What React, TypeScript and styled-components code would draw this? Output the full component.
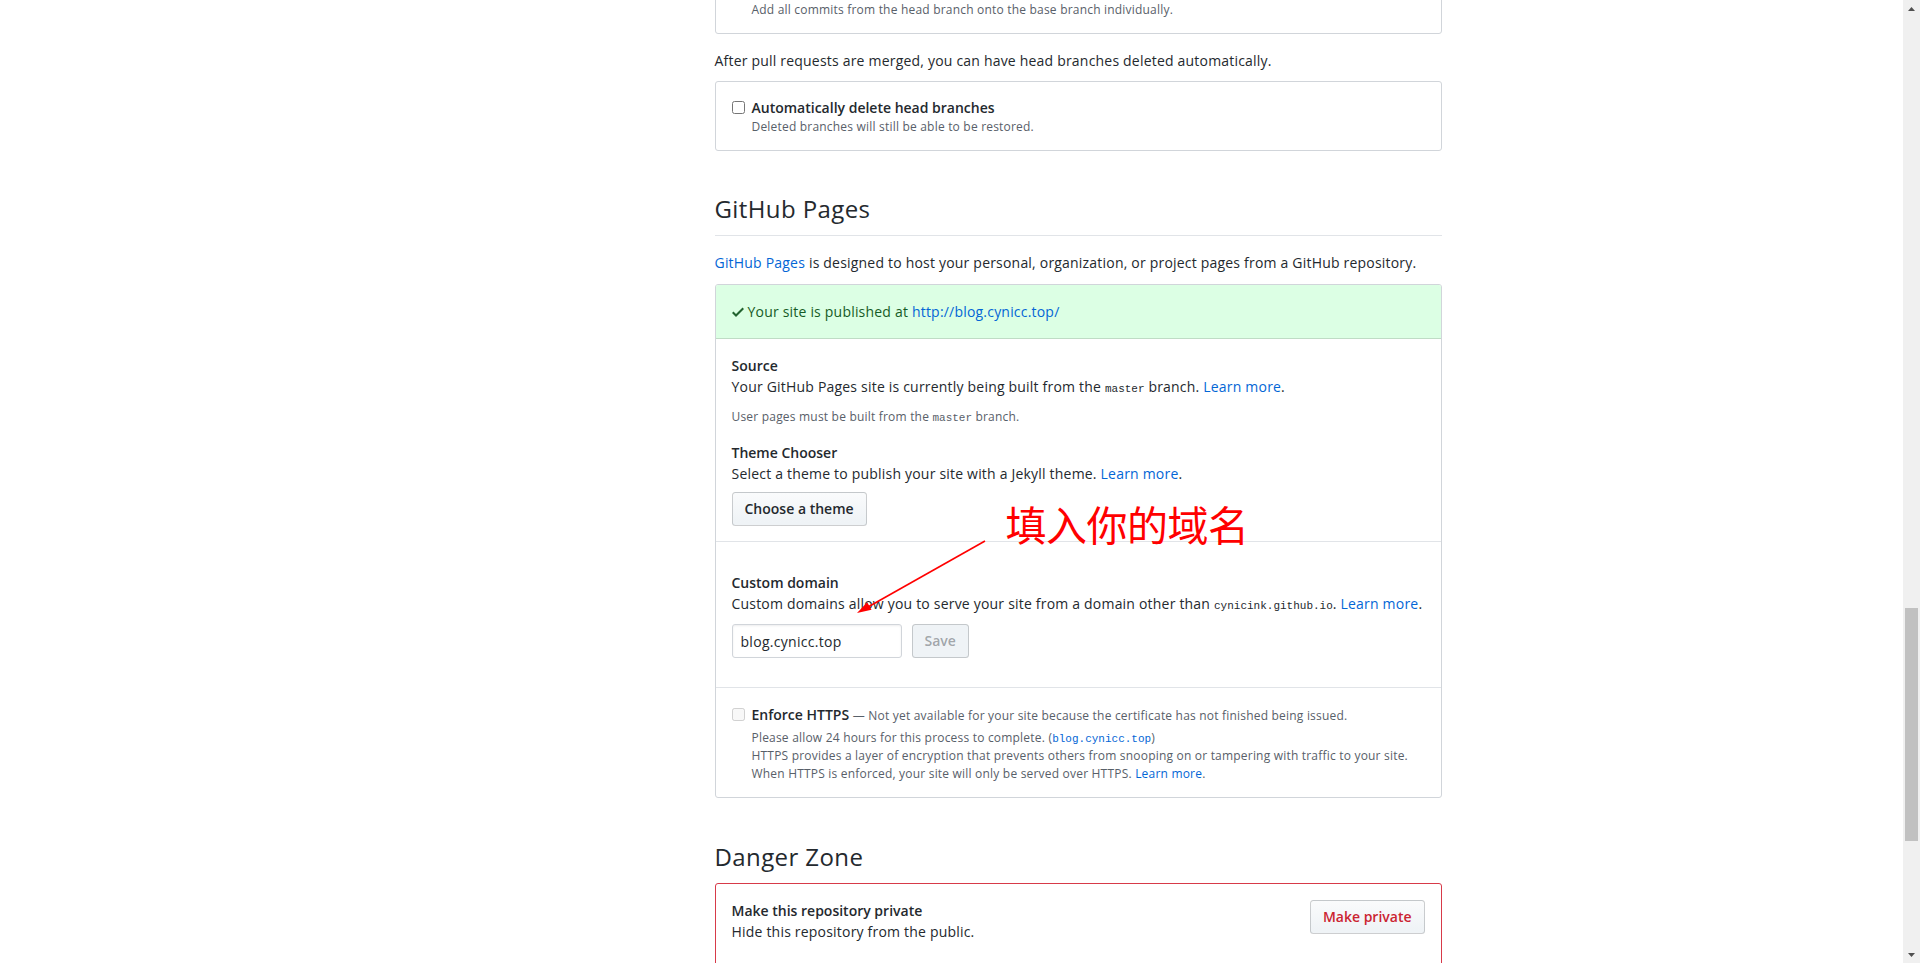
import React from "react";
import styled, { createGlobalStyle, css } from "styled-components";

const GlobalStyle = createGlobalStyle`
  html, body { margin: 0; padding: 0; height: 100%; overflow: hidden; background: #fff; }
  body {
    font-family: "Open Sans", "Noto Sans CJK SC", sans-serif;
    font-size: 14px;
    line-height: 1.5;
    letter-spacing: 0.2px;
    color: #24292e;
  }
  #root { height: 100%; }
  * { box-sizing: border-box; }
`;

const Viewport = styled.div`
  display: flex;
  height: 963px;
  width: 100%;
`;

const Page = styled.div`
  flex: 1;
  min-width: 0;
  overflow: hidden;
  background: #fff;
`;

const Container = styled.div`
  width: 1012px;
  margin: 0 auto;
  display: flex;
`;

const Sidebar = styled.aside`
  width: 253px;
  flex: none;
`;

const Main = styled.main`
  width: 759px;
  flex: none;
  padding: 0 16px;
  margin-top: -36px;
`;

const Box = styled.div<{ $danger?: boolean }>`
  position: relative;
  border: 1px solid ${(p) => (p.$danger ? "#d73a49" : "#d1d5da")};
  border-radius: 3px;
  background: #fff;
`;

const BoxRow = styled.div<{ $pad?: string }>`
  padding: ${(p) => p.$pad ?? "16px"};
  & + & {
    border-top: 1px solid #e1e4e8;
  }
`;

const DangerRow = styled(BoxRow)`
  display: flex;
  justify-content: space-between;
  align-items: flex-start;
`;

const Flash = styled.div`
  padding: 16px;
  background: #dcffe4;
  color: #165c26;
  border-bottom: 1px solid #bfdcc5;
  border-radius: 2px 2px 0 0;
  display: flex;
  align-items: center;
  line-height: 21px;
`;

const CheckIcon = styled.svg`
  width: 12px;
  height: 16px;
  margin-right: 4px;
  fill: #22632f;
  flex: none;
`;

const CheckRow = styled.div`
  display: grid;
  grid-template-columns: 20px 1fr;
  align-items: start;
`;

const CheckBox = styled.input.attrs({ type: "checkbox" })`
  margin: 4px 0 0;
  width: 13px;
  height: 13px;
`;

const CheckLabel = styled.label`
  font-weight: 600;
  line-height: 21px;
  letter-spacing: 0;
`;

const InlineNote = styled.span`
  font-weight: 400;
  font-size: 12px;
  letter-spacing: 0.2px;
  color: #586069;
`;

const Note = styled.p<{ $mt?: number }>`
  margin: ${(p) => p.$mt ?? 0}px 0 0;
  font-size: 12px;
  line-height: 18px;
  color: #586069;
`;

const Paragraph = styled.p<{ $mt?: number; $mb?: number }>`
  margin: ${(p) => p.$mt ?? 0}px 0 ${(p) => p.$mb ?? 0}px;
  line-height: 21px;
`;

const Subhead = styled.div<{ $border?: boolean; $mt: number; $mb: number }>`
  margin-top: ${(p) => p.$mt}px;
  margin-bottom: ${(p) => p.$mb}px;
  padding-bottom: ${(p) => (p.$border ? 11 : 0)}px;
  border-bottom: ${(p) => (p.$border ? "1px solid #e1e4e8" : "none")};
`;

const SubheadTitle = styled.h2`
  margin: 0;
  font-size: 24px;
  font-weight: 400;
  line-height: 30px;
  letter-spacing: 0.4px;
`;

const FieldTitle = styled.h4<{ $mt?: number }>`
  margin: ${(p) => p.$mt ?? 0}px 0 0;
  font-size: 14px;
  font-weight: 600;
  line-height: 21px;
  letter-spacing: 0;
`;

const Text = styled.p`
  margin: 0;
  line-height: 21px;
`;

const Link = styled.a`
  color: #0366d6;
  text-decoration: none;
`;

const Code = styled.code`
  font-family: "Liberation Mono", "DejaVu Sans Mono", monospace;
  font-size: 11px;
  line-height: 1;
  letter-spacing: 0;
`;

const Button = styled.button<{ $variant?: "default" | "danger" | "disabled"; $mt?: number }>`
  display: inline-block;
  margin-top: ${(p) => p.$mt ?? 0}px;
  padding: 6px 12px;
  font-family: inherit;
  font-size: 14px;
  font-weight: 600;
  line-height: 20px;
  letter-spacing: 0;
  border: 1px solid rgba(27, 31, 35, 0.2);
  border-radius: 3.5px;
  background-image: linear-gradient(-180deg, #fafbfc 0%, #eff3f6 90%);
  color: #24292e;
  white-space: nowrap;
  cursor: pointer;
  ${(p) =>
    p.$variant === "danger" &&
    css`
      color: #cb2431;
    `}
  ${(p) =>
    p.$variant === "disabled" &&
    css`
      color: rgba(36, 41, 46, 0.4);
      background: #eff3f6;
      background-image: none;
      cursor: default;
    `}
`;

const InputRow = styled.div`
  display: flex;
  gap: 10px;
  margin-top: 10px;
`;

const Input = styled.input`
  width: 170px;
  height: 34px;
  padding: 6px 8px;
  font-family: inherit;
  font-size: 14px;
  line-height: 20px;
  letter-spacing: 0.3px;
  color: #24292e;
  background: #fff;
  border: 1px solid #d1d5da;
  border-radius: 3px;
  box-shadow: inset 0 1px 2px rgba(27, 31, 35, 0.075);
  outline: none;
`;

const Annotation = styled.div`
  position: absolute;
  left: 290px;
  top: 218px;
  font-family: "Noto Sans CJK SC", sans-serif;
  font-size: 41px;
  line-height: 41px;
  letter-spacing: -0.5px;
  color: #ff0000;
  white-space: nowrap;
  pointer-events: none;
`;

const ArrowSvg = styled.svg`
  position: absolute;
  left: 130px;
  top: 250px;
  overflow: visible;
  pointer-events: none;
`;

const Scrollbar = styled.div`
  width: 17px;
  flex: none;
  background: #f0f0f0;
  display: flex;
  flex-direction: column;
`;

const ScrollArrow = styled.div`
  height: 17px;
  flex: none;
  display: flex;
  align-items: center;
  justify-content: center;
`;

const Track = styled.div`
  flex: 1;
`;

const Thumb = styled.div<{ $top: number; $height: number }>`
  margin: ${(p) => p.$top}px 2px 0;
  height: ${(p) => p.$height}px;
  background: #c1c1c1;
`;

export default function App() {
  return (
    <>
      <GlobalStyle />
      <Viewport>
        <Page>
          <Container>
            <Sidebar />
            <Main>
              <Box>
                <BoxRow $pad="15px 16px 14px">
                  <CheckRow>
                    <CheckBox defaultChecked />
                    <div>
                      <CheckLabel>Allow rebase merging</CheckLabel>
                      <Note>Add all commits from the head branch onto the base branch individually.</Note>
                    </div>
                  </CheckRow>
                </BoxRow>
              </Box>

              <Paragraph $mt={16} $mb={10}>
                After pull requests are merged, you can have head branches deleted automatically.
              </Paragraph>

              <Box>
                <BoxRow $pad="15px 16px 14px">
                  <CheckRow>
                    <CheckBox />
                    <div>
                      <CheckLabel>Automatically delete head branches</CheckLabel>
                      <Note>Deleted branches will still be able to be restored.</Note>
                    </div>
                  </CheckRow>
                </BoxRow>
              </Box>

              <Subhead $border $mt={43} $mb={16}>
                <SubheadTitle>GitHub Pages</SubheadTitle>
              </Subhead>

              <Paragraph $mb={11}>
                <Link href="#">GitHub Pages</Link> is designed to host your personal, organization, or project pages
                from a GitHub repository.
              </Paragraph>

              <Box>
                <Flash>
                  <CheckIcon viewBox="0 0 12 16">
                    <path d="M12 5l-8 8-4-4 1.5-1.5L4 10l6.5-6.5L12 5z" />
                  </CheckIcon>
                  <span>
                    Your site is published at <Link href="#">http://blog.cynicc.top/</Link>
                  </span>
                </Flash>

                <BoxRow $pad="16px 16px 15px">
                  <FieldTitle>Source</FieldTitle>
                  <Text>
                    Your GitHub Pages site is currently being built from the <Code>master</Code> branch.{" "}
                    <Link href="#">Learn more</Link>.
                  </Text>
                  <Note $mt={11}>
                    User pages must be built from the <Code>master</Code> branch.
                  </Note>
                  <FieldTitle $mt={16}>Theme Chooser</FieldTitle>
                  <Text>
                    Select a theme to publish your site with a Jekyll theme. <Link href="#">Learn more</Link>.
                  </Text>
                  <Button $mt={8}>Choose a theme</Button>
                </BoxRow>

                <BoxRow $pad="30px 16px 29px">
                  <FieldTitle>Custom domain</FieldTitle>
                  <Text>
                    Custom domains allow you to serve your site from a domain other than{" "}
                    <Code>cynicink.github.io</Code>. <Link href="#">Learn more</Link>.
                  </Text>
                  <InputRow>
                    <Input defaultValue="blog.cynicc.top" />
                    <Button $variant="disabled" disabled>
                      Save
                    </Button>
                  </InputRow>
                </BoxRow>

                <BoxRow $pad="16px 16px 14px">
                  <CheckRow>
                    <CheckBox disabled />
                    <div>
                      <CheckLabel>
                        Enforce HTTPS{" "}
                        <InlineNote>
                          — Not yet available for your site because the certificate has not finished being issued.
                        </InlineNote>
                      </CheckLabel>
                      <Note $mt={3}>
                        Please allow 24 hours for this process to complete. (
                        <Link href="#">
                          <Code>blog.cynicc.top</Code>
                        </Link>
                        )
                      </Note>
                      <Note>
                        HTTPS provides a layer of encryption that prevents others from snooping on or tampering with
                        traffic to your site.
                        <br />
                        When HTTPS is enforced, your site will only be served over HTTPS.{" "}
                        <Link href="#">Learn more</Link>.
                      </Note>
                    </div>
                  </CheckRow>
                </BoxRow>

                <Annotation>填入你的域名</Annotation>
                <ArrowSvg width="150" height="85" viewBox="0 0 150 85">
                  <line x1="139" y1="6" x2="22" y2="72" stroke="#ff0000" strokeWidth="1.6" />
                  <polygon points="11,78 25.5,74.8 21.2,67.2" fill="#ff0000" />
                </ArrowSvg>
              </Box>

              <Subhead $mt={44} $mb={11}>
                <SubheadTitle>Danger Zone</SubheadTitle>
              </Subhead>

              <Box $danger>
                <DangerRow $pad="16px 16px 40px">
                  <div>
                    <FieldTitle>Make this repository private</FieldTitle>
                    <Text>Hide this repository from the public.</Text>
                  </div>
                  <Button $variant="danger">Make private</Button>
                </DangerRow>
              </Box>
            </Main>
          </Container>
        </Page>

        <Scrollbar>
          <ScrollArrow>
            <svg width="7" height="4" viewBox="0 0 7 4">
              <polygon points="3.5,0 7,4 0,4" fill="#505050" />
            </svg>
          </ScrollArrow>
          <Track>
            <Thumb $top={591} $height={233} />
          </Track>
          <ScrollArrow>
            <svg width="7" height="4" viewBox="0 0 7 4">
              <polygon points="0,0 7,0 3.5,4" fill="#505050" />
            </svg>
          </ScrollArrow>
        </Scrollbar>
      </Viewport>
    </>
  );
}
